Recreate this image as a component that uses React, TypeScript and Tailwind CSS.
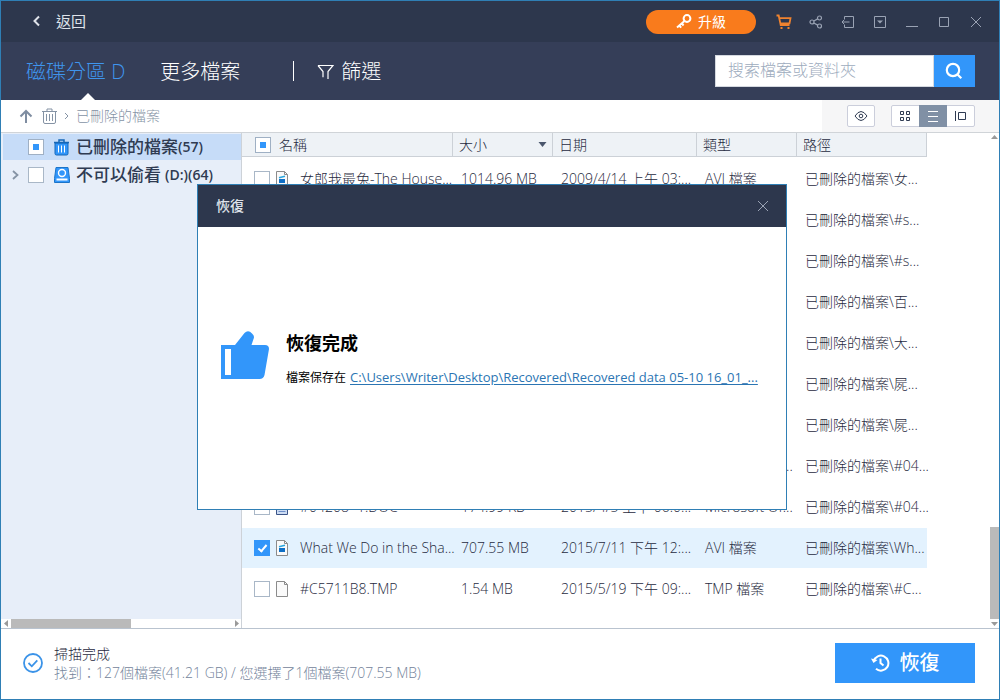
import React from 'react';

type FileKind = 'video' | 'doc' | 'blank';

interface FileRow {
  kind: FileKind;
  name: string;
  size: string;
  date: string;
  type: string;
  path: string;
  checked?: boolean;
}

const files: FileRow[] = [
  { kind: 'video', name: '女郎我最兔-The House...', size: '1014.96 MB', date: '2009/4/14 上午 03:...', type: 'AVI 檔案', path: '已刪除的檔案\\女...' },
  { kind: 'video', name: '', size: '', date: '', type: '', path: '已刪除的檔案\\#s...' },
  { kind: 'video', name: '', size: '', date: '', type: '', path: '已刪除的檔案\\#s...' },
  { kind: 'video', name: '', size: '', date: '', type: '', path: '已刪除的檔案\\百...' },
  { kind: 'video', name: '', size: '', date: '', type: '', path: '已刪除的檔案\\大...' },
  { kind: 'video', name: '', size: '', date: '', type: '', path: '已刪除的檔案\\屍...' },
  { kind: 'video', name: '', size: '', date: '', type: '', path: '已刪除的檔案\\屍...' },
  { kind: 'doc', name: '', size: '', date: '', type: 'Microsoft Of...', path: '已刪除的檔案\\#04...' },
  { kind: 'doc', name: '#04208~1.DOC', size: '174.99 KB', date: '2015/4/5 上午 06:0...', type: 'Microsoft Of...', path: '已刪除的檔案\\#04...' },
  { kind: 'video', name: 'What We Do in the Sha...', size: '707.55 MB', date: '2015/7/11 下午 12:...', type: 'AVI 檔案', path: '已刪除的檔案\\Wh...', checked: true },
  { kind: 'blank', name: '#C5711B8.TMP', size: '1.54 MB', date: '2015/5/19 下午 09:...', type: 'TMP 檔案', path: '已刪除的檔案\\#C...' },
];

const Checkbox: React.FC<{ label: string; checked?: boolean; partial?: boolean }> = ({ label, checked, partial }) => {
  const base = 'grid size-4 shrink-0 appearance-none place-items-center border';
  if (partial) {
    return <input type="checkbox" aria-label={label} className={`${base} border-[#9fb0c4] bg-white before:size-1.5 before:bg-[#3296fa] before:content-['']`} />;
  }
  return (
    <input
      type="checkbox"
      aria-label={label}
      defaultChecked={checked}
      className={`${base} border-[#a9b7c7] bg-white checked:border-[#3296fa] checked:bg-[#3296fa] checked:before:mb-0.5 checked:before:h-[9px] checked:before:w-[5px] checked:before:rotate-40 checked:before:border-r-2 checked:before:border-b-2 checked:before:border-white checked:before:content-['']`}
    />
  );
};

const FileIcon: React.FC<{ kind: FileKind }> = ({ kind }) => (
  <svg width="12" height="16" viewBox="0 0 12 16" fill="none" className="shrink-0">
    <path d="M.5.5h8l3 3v12H.5z" fill={kind === 'doc' ? '#cddcf3' : '#fafafa'} stroke={kind === 'doc' ? '#3b5488' : '#8b8b8b'} />
    <path d="M8.5.5v3h3" stroke="#8b8b8b" />
    {kind === 'video' && (
      <>
        <path d="M3 8h6v4H3z" fill="#0f6fc6" />
        <path d="M3 6.800 9 5.300" stroke="#2aa5dd" strokeWidth="1.500" />
      </>
    )}
    {kind === 'doc' && <path d="M2.5 8.5h7M2.5 10.5h7M2.5 12.5h7" stroke="#6d8fc9" />}
  </svg>
);

const TitleBar: React.FC = () => (
  <header className="flex h-[41px] shrink-0 items-center bg-[#2d374d] pr-[7px] pl-[30px] text-[#9aa3b4]">
    <button className="flex items-center gap-3.5 pb-0.5 text-[15px] leading-5 text-[#dfe3ea]">
      <svg width="11" height="12" viewBox="0 0 11 12" fill="none" stroke="currentColor" strokeWidth="2">
        <path d="M8 1.5 3.5 6 8 10.5" />
      </svg>
      返回
    </button>
    <button className="ml-auto flex h-6 w-[110px] items-center justify-center gap-1.5 rounded-full bg-[#f97b1c] text-sm text-white">
      <svg width="16" height="15" viewBox="0 0 16 15" fill="none" stroke="currentColor" strokeWidth="2">
        <circle cx="11" cy="4.5" r="3.4" />
        <path d="M8.5 7 1 13.5M3.2 11.5l2 2.2M5.8 9.5l1.8 2" />
      </svg>
      升級
    </button>
    <div className="ml-3 flex">
      <button aria-label="購物車" className="grid size-8 place-items-center text-[#f0832f]">
        <svg width="16" height="16" viewBox="0 0 16 16" fill="none" stroke="currentColor" strokeWidth="1.8">
          <path d="M.5 1.500h2.200l2 9.700h8.800M3.300 4.100h11.200l-1 5.200H4.400" />
          <path d="M4.500 14h2M11.500 14h2" strokeWidth="2" />
        </svg>
      </button>
      <button aria-label="分享" className="grid size-8 place-items-center">
        <svg width="14" height="14" viewBox="0 0 14 14" fill="none" stroke="currentColor" strokeWidth="1.2">
          <circle cx="3" cy="7" r="2" />
          <circle cx="10.5" cy="3" r="2" />
          <circle cx="10.5" cy="11" r="2" />
          <path d="m4.8 6 3.9-2.1M4.8 8l3.9 2.1" />
        </svg>
      </button>
      <button aria-label="匯入" className="grid size-8 place-items-center">
        <svg width="14" height="14" viewBox="0 0 14 14" fill="none" stroke="currentColor">
          <path d="M3.5 4V1.5h9v11h-9V10M1 7h7.5M3.5 4.5 1 7l2.5 2.5" />
        </svg>
      </button>
      <button aria-label="選單" className="grid size-8 place-items-center">
        <svg width="14" height="14" viewBox="0 0 14 14" fill="none" stroke="currentColor">
          <path d="M1.5 1.5h11v11h-11z" />
          <path d="M4 5.5h6l-3 3z" fill="currentColor" stroke="none" />
        </svg>
      </button>
      <button aria-label="最小化" className="grid size-8 place-items-center">
        <svg width="14" height="14" viewBox="0 0 14 14" fill="none" stroke="currentColor">
          <path d="M1 11.5h12" />
        </svg>
      </button>
      <button aria-label="最大化" className="grid size-8 place-items-center">
        <svg width="14" height="14" viewBox="0 0 14 14" fill="none" stroke="currentColor">
          <path d="M2.5 2.5h9v9h-9z" />
        </svg>
      </button>
      <button aria-label="關閉" className="grid size-8 place-items-center">
        <svg width="14" height="14" viewBox="0 0 14 14" fill="none" stroke="currentColor">
          <path d="m2 2 10 10M12 2 2 12" />
        </svg>
      </button>
    </div>
  </header>
);

const NavBar: React.FC = () => (
  <nav className="flex h-[58px] shrink-0 items-center bg-[#353e58] pr-6 pl-[25px] text-xl leading-7 font-light text-white">
    <button className="relative flex h-full items-center pt-0.5 text-[#3f95ee]">
      磁碟分區 D
      {/* 目前分頁的指示箭頭 */}
      <svg className="absolute bottom-0 left-[55px]" width="14" height="7" viewBox="0 0 14 7">
        <path d="M0 7 7 0l7 7z" fill="#fff" />
      </svg>
    </button>
    <button className="ml-[35px] pt-0.5">更多檔案</button>
    <div className="ml-[53px] h-5 w-px bg-white" />
    <button className="ml-[23px] flex items-center gap-[7px] pt-0.5">
      <svg width="17" height="16" viewBox="0 0 17 16" fill="none" stroke="currentColor" strokeWidth="1.2">
        <path d="M1 1.5h15l-5 6V15M1 1.5l5 6v5.7" />
      </svg>
      篩選
    </button>
    <div className="ml-auto flex h-8 w-[260px]">
      <input
        type="text"
        aria-label="搜索"
        placeholder="搜索檔案或資料夾"
        className="min-w-0 flex-1 border border-[#d5d9e0] bg-white px-3 pb-0.5 text-base text-gray-700 placeholder:text-[#9dabbd]"
      />
      <button aria-label="搜索檔案" className="grid w-[41px] place-items-center bg-[#3296fa] pr-0.5">
        <svg width="18" height="18" viewBox="0 0 18 18" fill="none" stroke="currentColor" strokeWidth="2.2">
          <circle cx="8" cy="8" r="6.2" />
          <path d="m12.3 12.3 4 4" />
        </svg>
      </button>
    </div>
  </nav>
);

const Breadcrumb: React.FC = () => (
  <div className="flex h-[33px] shrink-0 items-center border-b border-[#d0d4d8] pl-[18px] text-sm text-[#8593a5]">
    <button aria-label="上一層">
      <svg width="14" height="14" viewBox="0 0 14 14" fill="none" stroke="#7f8da1" strokeWidth="2">
        <path d="M7 14V2M1.5 7.5 7 2l5.5 5.5" />
      </svg>
    </button>
    <svg className="ml-[9px]" width="15" height="16" viewBox="0 0 15 16" fill="none" stroke="#8593a5">
      <path d="M0 3.500h15M5 3V1h5v2M1.500 3.500V14q0 1.500 1.500 1.500h9q1.500 0 1.500-1.500V3.500M4.500 6v7M7.500 6v7M10.500 6v7" />
    </svg>
    <svg className="ml-[7px]" width="5" height="8" viewBox="0 0 5 8" fill="none" stroke="#8593a5">
      <path d="m1 1 3 3-3 3" />
    </svg>
    <button className="ml-[7px] font-light">已刪除的檔案</button>
    <div className="ml-auto flex h-full items-center gap-4 bg-[#f6f6f7] pr-6 pl-[25px] text-[#2f3b52]">
      <button aria-label="預覽" className="grid h-[22px] w-7 place-items-center rounded-xs border border-[#cbcedb] bg-white">
        <svg width="14" height="12" viewBox="0 0 14 12" fill="none" stroke="currentColor">
          <path d="M1 6q6-9 12 0-6 9-12 0z" />
          <circle cx="7" cy="6" r="1.800" />
        </svg>
      </button>
      <div className="flex h-[22px] rounded-xs border border-[#cbcedb] bg-white">
        <button aria-label="圖示" className="grid w-[27px] place-items-center">
          <svg width="11" height="11" viewBox="0 0 11 11" fill="none" stroke="currentColor">
            <path d="M.5.5h3v3h-3zM6.500.5h3v3h-3zM.5 6.500h3v3h-3zM6.500 6.500h3v3h-3z" />
          </svg>
        </button>
        <button aria-label="清單" className="-my-px grid w-7 place-items-center bg-[#8090a5] text-white">
          <svg width="10" height="11" viewBox="0 0 10 11" fill="none" stroke="currentColor">
            <path d="M0 .5h10M0 5.500h10M0 10.500h10" />
          </svg>
        </button>
        <button aria-label="詳細" className="grid w-[27px] place-items-center">
          <svg width="11" height="10" viewBox="0 0 11 10" fill="none" stroke="currentColor">
            <path d="M.5 0v10M3.500 1.500h7v7h-7z" />
          </svg>
        </button>
      </div>
    </div>
  </div>
);

const Sidebar: React.FC = () => (
  <aside className="flex w-[241px] shrink-0 flex-col border-r border-[#cdd2d8] bg-[#e7eef9] text-[#2f3b52]">
    <ul className="flex flex-1 flex-col gap-0.5 pt-px pl-0.5 text-sm leading-6 font-semibold">
      <li className="flex h-[26px] items-center bg-[#c6dcf8] pl-[25px]">
        <Checkbox label="已刪除的檔案" partial />
        <svg className="mr-1.5 ml-2.5" width="16" height="17" viewBox="0 0 16 17" fill="none">
          <path d="M1 4h13v10.500a1.500 1.500 0 0 1-1.500 1.500h-10A1.500 1.500 0 0 1 1 14.500z" fill="#3296fa" stroke="#1667b7" />
          <path d="M0 3.500h15M5 3V1h5v2" stroke="#1667b7" strokeWidth="1.500" />
          <path d="M4.500 6.500v7M7.500 6.500v7M10.500 6.500v7" stroke="#fff" />
        </svg>
        <span className="text-[17px] font-medium">已刪除的檔案</span>(57)
      </li>
      <li className="flex h-[26px] items-center pl-2">
        <svg className="mr-2" width="9" height="12" viewBox="0 0 9 12" fill="none" stroke="#8593a5" strokeWidth="1.800">
          <path d="m2 2 4.500 4L2 10" />
        </svg>
        <Checkbox label="不可以偷看 (D:)" />
        <svg className="mr-1.5 ml-2.5" width="16" height="16" viewBox="0 0 16 16" fill="none">
          <path d="M2 .5h12l1.500 11v4H.5v-4z" fill="#3296fa" stroke="#1c74c8" />
          <circle cx="8" cy="6" r="3.500" stroke="#fff" strokeWidth="1.400" />
          <path d="M2.500 12.500h11" stroke="#fff" strokeWidth="2" />
        </svg>
        <span className="text-[17px] font-medium">不可以偷看</span>
        <span className="ml-1">(D:)(64)</span>
      </li>
    </ul>
    <div className="flex h-[9px] items-center justify-between bg-white pr-0.5 pl-[3px]">
      <svg width="4" height="7" viewBox="0 0 4 7">
        <path d="M4 0v7L0 3.500z" fill="#9a9a9a" />
      </svg>
      <div className="mr-auto ml-[3px] h-full w-[120px] bg-[#bababa]" />
      <svg width="4" height="7" viewBox="0 0 4 7">
        <path d="M0 0v7l4-3.500z" fill="#9a9a9a" />
      </svg>
    </div>
  </aside>
);

const FileTable: React.FC = () => {
  const head = 'flex h-6 items-center border-r border-b border-[#ccd1d7] bg-[#eef2f6] pl-1.5';
  return (
    <div className="flex min-w-0 flex-1 justify-between overflow-hidden">
      <table className="w-[685px] table-fixed self-start border-separate border-spacing-0 text-left text-sm leading-5 font-light whitespace-nowrap text-[#1f2a40]">
        <colgroup>
          <col className="w-[211px]" />
          <col className="w-[100px]" />
          <col className="w-36" />
          <col className="w-[100px]" />
          <col className="w-[130px]" />
        </colgroup>
        <thead>
          <tr className="h-[26px] align-top">
            <th className="p-0 font-light">
              <div className={`${head} gap-2 pl-[13px]`}>
                <Checkbox label="全選" partial />
                名稱
              </div>
            </th>
            <th className="p-0 font-light">
              <div className={`${head} justify-between pr-[5px]`}>
                大小
                <svg width="9" height="5" viewBox="0 0 9 5">
                  <path d="M.5 0h8l-4 5z" fill="#4a566c" />
                </svg>
              </div>
            </th>
            <th className="p-0 font-light"><div className={head}>日期</div></th>
            <th className="p-0 font-light"><div className={head}>類型</div></th>
            <th className="p-0 font-light"><div className={head}>路徑</div></th>
          </tr>
        </thead>
        <tbody>
          {files.map((file, i) => (
            <tr key={i} className={file.checked ? 'h-[41px] bg-[#e3f2fe]' : 'h-[41px]'}>
              <td className="border-b border-white p-0 pl-3">
                <div className="flex items-center">
                  <Checkbox label={file.name || file.path} checked={file.checked} />
                  <span className="mr-3 ml-1.5"><FileIcon kind={file.kind} /></span>
                  {file.name}
                </div>
              </td>
              <td className="border-b border-white p-0 pl-2">{file.size}</td>
              <td className="border-b border-white p-0 pl-2">{file.date}</td>
              <td className="border-b border-white p-0 pl-2">{file.type}</td>
              <td className="border-b border-white p-0 pl-2">{file.path}</td>
            </tr>
          ))}
        </tbody>
      </table>
      {/* 垂直捲軸 */}
      <div className="flex w-[9px] shrink-0 flex-col items-center gap-[3px] pt-0.5 pb-0.5">
        <svg width="7" height="4" viewBox="0 0 7 4">
          <path d="M0 4h7L3.500 0z" fill="#9a9a9a" />
        </svg>
        <div className="mt-auto h-[92px] w-full bg-[#bababa]" />
        <svg width="7" height="4" viewBox="0 0 7 4">
          <path d="M0 0h7L3.500 4z" fill="#9a9a9a" />
        </svg>
      </div>
    </div>
  );
};

const StatusBar: React.FC = () => (
  <footer className="flex h-[71px] shrink-0 items-center border-t border-[#b9c3cf] pr-6 pb-0.5 pl-[22px]">
    <svg width="20" height="20" viewBox="0 0 20 20" fill="none" stroke="#3b93e8" strokeWidth="1.800">
      <circle cx="10" cy="10" r="9" />
      <path d="m5.500 10 3.300 3.300 5.500-6" />
    </svg>
    <div className="ml-[11px] text-sm leading-[19px] font-light">
      <p className="text-[#1f2a40]">掃描完成</p>
      <p className="text-[#73839a]">找到：127個檔案(41.21 GB) / 您選擇了1個檔案(707.55 MB)</p>
    </div>
    <button className="ml-auto flex h-10 w-[140px] items-center justify-center gap-2.5 bg-[#3296fa] text-xl font-medium text-white">
      <svg width="19" height="18" viewBox="0 0 19 18" fill="none" stroke="currentColor" strokeWidth="2">
        <path d="M2.700 7A7.500 7.500 0 1 1 5 14.800M9.500 4.500V9l3 2.500" />
        <path d="M0 4.500 2.500 9 6.500 6z" fill="currentColor" stroke="none" />
      </svg>
      恢復
    </button>
  </footer>
);

const RecoveryDialog: React.FC = () => (
  <div className="absolute inset-0 flex items-center justify-center pr-4 pb-1.5">
    <section role="dialog" aria-labelledby="dialog-title" className="flex h-[326px] w-[590px] flex-col border border-[#2f7fb5] bg-white">
      <div className="flex h-[42px] shrink-0 items-center justify-between bg-[#2d374d] pr-4 pl-[18px]">
        <h2 id="dialog-title" className="text-sm font-medium text-[#dfe3ea]">恢復</h2>
        <button aria-label="關閉" className="text-[#9aa3b4]">
          <svg width="14" height="14" viewBox="0 0 14 14" fill="none" stroke="currentColor">
            <path d="m2 2 10 10M12 2 2 12" />
          </svg>
        </button>
      </div>
      <div className="flex flex-1 items-center pb-[26px] pl-[23px] text-black">
        <svg width="48" height="48" viewBox="0 0 48 48" fill="#3296fa">
          <path d="M0 14h14L23.500 2Q26-.5 29 .8l2 1.700q3 2.500 1.500 5.500L30.500 14H44q4 0 4 4l-4.500 26q-1 4-5 4H0z" />
          <path d="M4 18h6v26H4z" fill="#fff" />
        </svg>
        <div className="mt-3 ml-[17px]">
          <h3 className="text-lg leading-7 font-bold">恢復完成</h3>
          <p className="mt-1 flex items-baseline gap-1 text-xs leading-8 whitespace-nowrap">
            檔案保存在
            <a href="#recovered" className="text-[13px] text-[#2b75b3] underline underline-offset-2">
              C:\Users\Writer\Desktop\Recovered\Recovered data 05-10 16_01_...
            </a>
          </p>
        </div>
      </div>
    </section>
  </div>
);

const App: React.FC = () => {
  return (
    <div className="relative flex h-screen flex-col overflow-hidden border border-[#2f7fb5] bg-white font-['Open_Sans','Noto_Sans_CJK_TC',sans-serif]">
      <TitleBar />
      <NavBar />
      <Breadcrumb />
      <main className="flex min-h-0 flex-1">
        <Sidebar />
        <FileTable />
      </main>
      <StatusBar />
      <RecoveryDialog />
    </div>
  );
};

export default App;
